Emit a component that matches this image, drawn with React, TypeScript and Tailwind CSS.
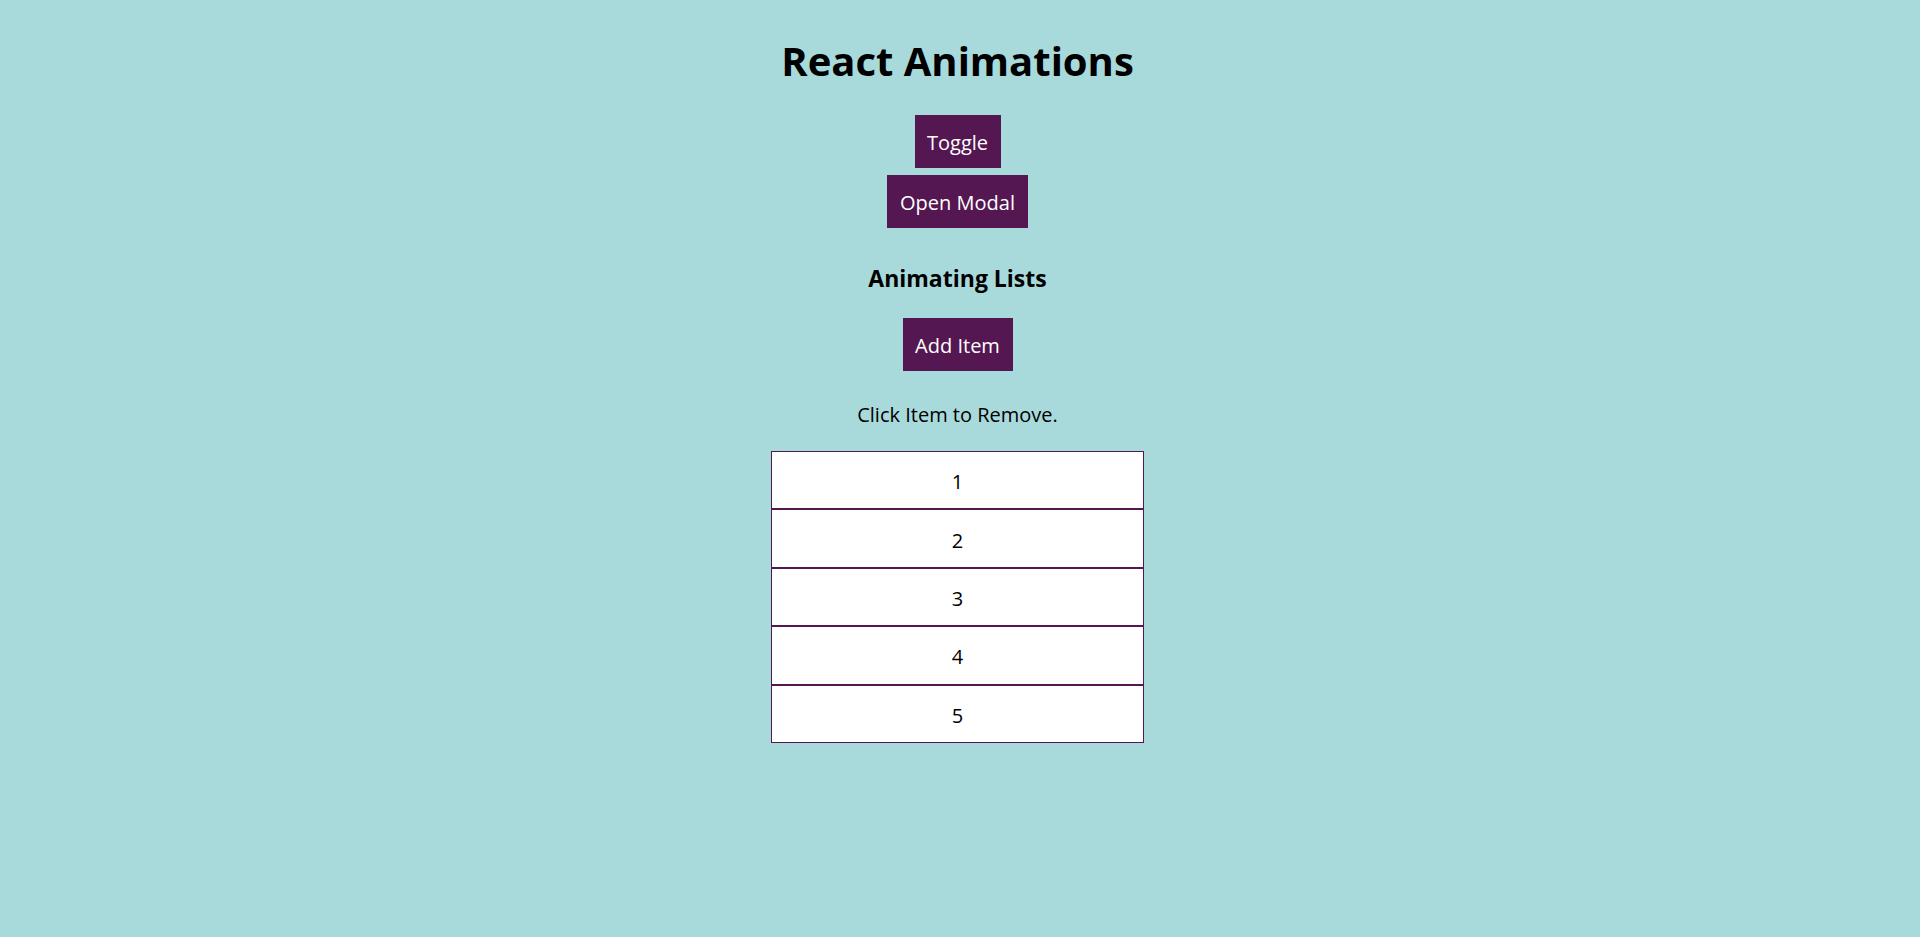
import { useState } from "react";

const btn =
  "bg-[#541751] px-3 pt-[14px] pb-[12px] text-[20px] leading-[27px] text-white hover:bg-[#6a1f66]";

export default function App() {
  const [items, setItems] = useState<number[]>([1, 2, 3, 4, 5]);

  const addItem = () => {
    setItems((prev) => [...prev, (prev[prev.length - 1] ?? 0) + 1]);
  };

  const removeItem = (id: number) => {
    setItems((prev) => prev.filter((i) => i !== id));
  };

  return (
    <div className="flex h-[937px] flex-col items-center bg-[#a8dadc] pr-[5px] font-['Open_Sans',sans-serif] text-black">
      <h1 className="mt-[36px] text-[40px] leading-[50px] font-bold">React Animations</h1>
      <button className={`${btn} mt-[29px] h-[53px] w-[86px]`}>Toggle</button>
      <button className={`${btn} mt-[7px] h-[53px] w-[141px]`}>Open Modal</button>
      <h3 className="mt-[35px] text-[23px] leading-[30px] font-bold">Animating Lists</h3>
      <button onClick={addItem} className={`${btn} mt-[25px] h-[53px] w-[110px]`}>
        Add Item
      </button>
      <p className="mt-[30px] text-[20px] leading-[27px]">Click Item to Remove.</p>
      <ul className="mt-[23px] w-[373px]">
        {items.map((item) => (
          <li
            key={item}
            onClick={() => removeItem(item)}
            className="flex h-[58.4px] cursor-pointer items-center justify-center border border-[#541751] bg-white pt-[4px] text-[20px]"
          >
            {item}
          </li>
        ))}
      </ul>
    </div>
  );
}
